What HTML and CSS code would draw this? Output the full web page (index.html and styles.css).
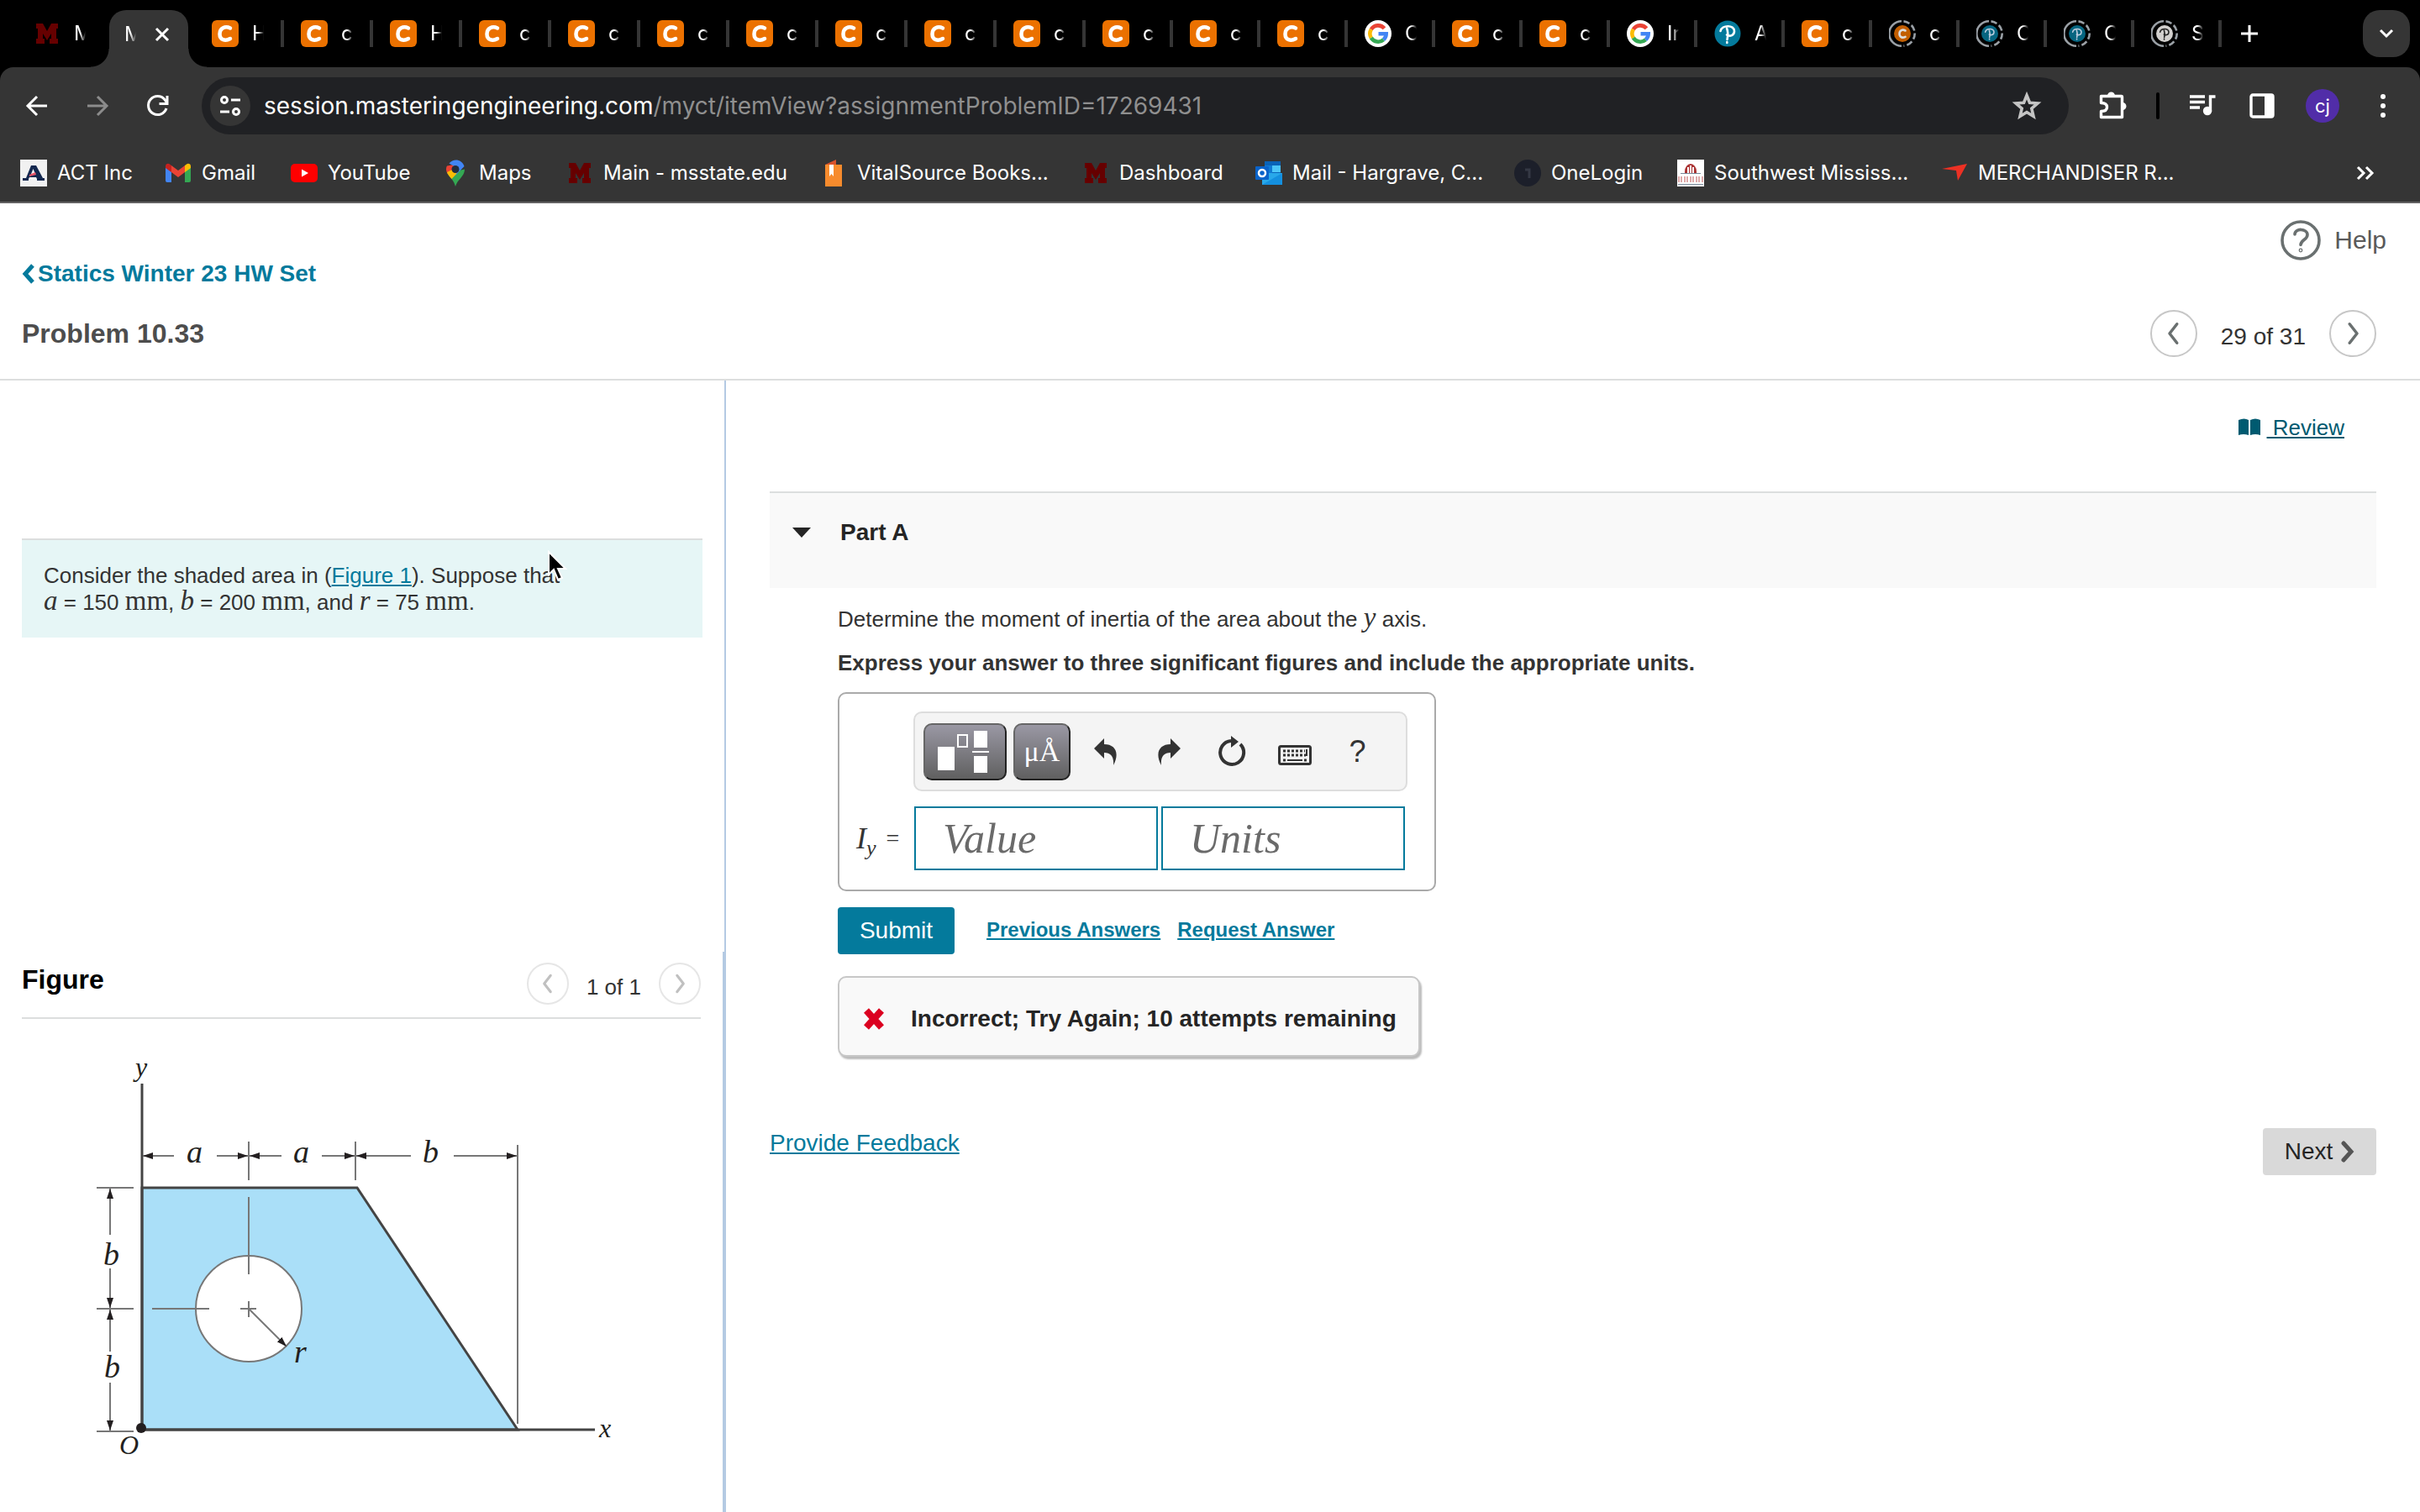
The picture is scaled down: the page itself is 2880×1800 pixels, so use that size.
FILE: index.html
```html
<!DOCTYPE html>
<html lang="en">
<head>
<meta charset="utf-8">
<title>Problem 10.33</title>
<link rel="stylesheet" href="styles.css">
</head>
<body>
<svg class="defs" aria-hidden="true">
  <symbol id="chegg" viewBox="0 0 32 32"><rect width="32" height="32" rx="6" fill="#eb7100"/><path d="M22 9.500C16 6.500 9.500 9.500 9.500 16.500 9.500 23.500 16 25.500 22 22" fill="none" stroke="#fff" stroke-width="4.500" stroke-linecap="round"/></symbol>
  <symbol id="google" viewBox="0 0 32 32"><circle cx="16" cy="16" r="16" fill="#fff"/><g fill="none" stroke-width="4.600"><path d="M23.500 9.800A9.700 9.700 0 0 0 7.800 11" stroke="#ea4335"/><path d="M7.800 11A9.700 9.700 0 0 0 7.800 21" stroke="#fbbc05"/><path d="M7.800 21A9.700 9.700 0 0 0 22.500 23.300" stroke="#34a853"/><path d="M22.500 23.300A9.700 9.700 0 0 0 25.700 16.300H16.500" stroke="#4285f4"/></g></symbol>
  <symbol id="mstate" viewBox="0 0 32 32"><path d="M3 4h8l5 9 5-9h8v6h-2v12h2v6h-10v-6h2v-6l-5 8-5-8v6h2v6H3v-6h2V10H3z" fill="#660000"/></symbol>
  <symbol id="pearson-mark" viewBox="0 0 32 32"><path d="M7.500 13C9 5.500 24 5 24 13c0 5-5 7-9 4.500M15 9.500c1.500 4 1.500 9 .5 13.500M15.300 26v1" fill="none" stroke="currentColor" stroke-width="2.600" stroke-linecap="round"/></symbol>
  <symbol id="pearson" viewBox="0 0 32 32"><circle cx="16" cy="16" r="15.500" fill="#047a9c"/><use href="#pearson-mark" color="#fff"/></symbol>
  <symbol id="ring" viewBox="0 0 32 32"><g fill="none" stroke="#9aa0a6" stroke-width="2.600"><path d="M15 1.300a14.700 14.700 0 0 0 0 29.400"/><path d="M17.500 1.400A14.700 14.700 0 0 1 30.700 16a14.700 14.700 0 0 1-13.200 14.600" stroke-dasharray="7.400 3.100"/></g></symbol>
  <symbol id="chegg-idle" viewBox="0 0 32 32"><use href="#ring"/><circle cx="16" cy="16" r="10" fill="#c25e00"/><path d="M19.500 12.500c-3.500-2-7 0-7 3.800s3.500 5.500 7 3.500" fill="none" stroke="#ddd" stroke-width="2.600" stroke-linecap="round"/></symbol>
  <symbol id="pearson-idle" viewBox="0 0 32 32"><use href="#ring"/><circle cx="16" cy="16" r="10" fill="#066580"/><use href="#pearson-mark" x="6" y="6" width="20" height="20" color="#bcd"/></symbol>
  <symbol id="pearson-grey" viewBox="0 0 32 32"><use href="#ring"/><circle cx="16" cy="16" r="10" fill="#d2d0ce"/><use href="#pearson-mark" x="6" y="6" width="20" height="20" color="#222"/></symbol>
  <symbol id="left" viewBox="0 0 24 24"><path d="M15 3 8 12l7 9" fill="none" stroke="currentColor" stroke-width="2.800" stroke-linecap="round" stroke-linejoin="round"/></symbol>
  <symbol id="right" viewBox="0 0 24 24"><path d="m9 3 7 9-7 9" fill="none" stroke="currentColor" stroke-width="2.800" stroke-linecap="round" stroke-linejoin="round"/></symbol>
</svg>

<header class="browser">
  <div class="tabstrip">
    <div class="tabs" role="tablist">
      <button class="tab tab-first" role="tab"><svg class="fav"><use href="#mstate"/></svg><span class="tab-label">M</span></button>
      <button class="tab tab-active" role="tab" aria-selected="true"><span class="tab-label">M</span><svg class="tab-close" viewBox="0 0 18 18"><path d="m2 2 14 14M16 2 2 16" stroke="#fff" stroke-width="3"/></svg></button>
      <button class="tab" role="tab"><svg class="fav"><use href="#chegg"/></svg><span class="tab-label">H</span></button>
      <button class="tab" role="tab"><svg class="fav"><use href="#chegg"/></svg><span class="tab-label">c</span></button>
      <button class="tab" role="tab"><svg class="fav"><use href="#chegg"/></svg><span class="tab-label">H</span></button>
      <button class="tab" role="tab"><svg class="fav"><use href="#chegg"/></svg><span class="tab-label">c</span></button>
      <button class="tab" role="tab"><svg class="fav"><use href="#chegg"/></svg><span class="tab-label">c</span></button>
      <button class="tab" role="tab"><svg class="fav"><use href="#chegg"/></svg><span class="tab-label">c</span></button>
      <button class="tab" role="tab"><svg class="fav"><use href="#chegg"/></svg><span class="tab-label">c</span></button>
      <button class="tab" role="tab"><svg class="fav"><use href="#chegg"/></svg><span class="tab-label">c</span></button>
      <button class="tab" role="tab"><svg class="fav"><use href="#chegg"/></svg><span class="tab-label">c</span></button>
      <button class="tab" role="tab"><svg class="fav"><use href="#chegg"/></svg><span class="tab-label">c</span></button>
      <button class="tab tab-narrow" role="tab"><svg class="fav"><use href="#chegg"/></svg><span class="tab-label">c</span></button>
      <button class="tab tab-narrow" role="tab"><svg class="fav"><use href="#chegg"/></svg><span class="tab-label">c</span></button>
      <button class="tab tab-narrow" role="tab"><svg class="fav"><use href="#chegg"/></svg><span class="tab-label">c</span></button>
      <button class="tab tab-narrow" role="tab"><svg class="fav"><use href="#google"/></svg><span class="tab-label">C</span></button>
      <button class="tab tab-narrow" role="tab"><svg class="fav"><use href="#chegg"/></svg><span class="tab-label">c</span></button>
      <button class="tab tab-narrow" role="tab"><svg class="fav"><use href="#chegg"/></svg><span class="tab-label">c</span></button>
      <button class="tab tab-narrow" role="tab"><svg class="fav"><use href="#google"/></svg><span class="tab-label">Ir</span></button>
      <button class="tab tab-narrow" role="tab"><svg class="fav"><use href="#pearson"/></svg><span class="tab-label">A</span></button>
      <button class="tab tab-narrow" role="tab"><svg class="fav"><use href="#chegg"/></svg><span class="tab-label">c</span></button>
      <button class="tab tab-narrow" role="tab"><svg class="fav"><use href="#chegg-idle"/></svg><span class="tab-label">c</span></button>
      <button class="tab tab-narrow" role="tab"><svg class="fav"><use href="#pearson-idle"/></svg><span class="tab-label">C</span></button>
      <button class="tab tab-narrow" role="tab"><svg class="fav"><use href="#pearson-idle"/></svg><span class="tab-label">C</span></button>
      <button class="tab tab-narrow" role="tab"><svg class="fav"><use href="#pearson-grey"/></svg><span class="tab-label">S</span></button>
    </div>
    <button class="new-tab" aria-label="New tab"><svg width="22" height="22" viewBox="0 0 22 22"><path d="M11 1v20M1 11h20" stroke="#fff" stroke-width="3"/></svg></button>
    <button class="tab-search" aria-label="Search tabs"><svg width="20" height="20" viewBox="0 0 20 20"><path d="m3 6 7 7 7-7" fill="none" stroke="#fff" stroke-width="3"/></svg></button>
  </div>

  <div class="toolbar">
    <div class="nav">
      <button class="tool" aria-label="Back"><svg viewBox="0 0 36 36"><path d="M30 18H8M18 7 7 18l11 11" fill="none" stroke="#fff" stroke-width="3"/></svg></button>
      <button class="tool" aria-label="Forward"><svg viewBox="0 0 36 36"><path d="M6 18h22M18 7l11 11-11 11" fill="none" stroke="#8c8c8c" stroke-width="3"/></svg></button>
      <button class="tool" aria-label="Reload"><svg viewBox="0 0 36 36"><path d="M28 21a11 11 0 1 1-2-10.500l2 3" fill="none" stroke="#fff" stroke-width="3"/><path d="M30.500 6v11h-11v-3h8V6z" fill="#fff"/></svg></button>
    </div>
    <div class="omnibox">
      <span class="site-info"><svg width="26" height="26" viewBox="0 0 26 26" fill="none" stroke="#fff" stroke-width="3"><circle cx="6" cy="6" r="3.500"/><path d="M14 6h11M1 20h11"/><circle cx="20" cy="20" r="3.500"/></svg></span>
      <span class="url">session.masteringengineering.com<span class="url-path">/myct/itemView?assignmentProblemID=17269431</span></span>
      <svg class="star" viewBox="0 0 36 36"><path d="m18 5.500 3.500 8.700 9.500.8-7.200 6.200 2.200 9.300-8-5-8 5 2.200-9.300L5 15l9.500-.8z" fill="none" stroke="#c4c4c4" stroke-width="3.600"/></svg>
    </div>
    <button class="tool" aria-label="Extensions"><svg viewBox="0 0 36 36"><path d="M4.500 6.500h24a1 1 0 0 1 1 1v24h-25v-7c5 0 7-2 7-5s-2-5-7-5z" fill="none" stroke="#fff" stroke-width="3.400" stroke-linejoin="round"/><path d="M12 6a4.500 4.500 0 0 1 9 0zM30 14a4.500 4.500 0 0 1 0 9z" fill="#fff"/></svg></button>
    <span class="divider"></span>
    <button class="tool" aria-label="Media"><svg viewBox="0 0 36 36"><path d="M2 7h18M2 13.500h18M2 20h12M26.500 25V7h6" fill="none" stroke="#fff" stroke-width="3.400"/><circle cx="23" cy="24" r="5.200" fill="#fff"/></svg></button>
    <button class="tool" aria-label="Side panel"><svg viewBox="0 0 36 36"><rect x="5" y="5" width="26" height="26" rx="2" fill="none" stroke="#fff" stroke-width="3.400"/><path d="M21 5h10v26H21z" fill="#fff"/></svg></button>
    <button class="avatar">cj</button>
    <button class="tool" aria-label="Menu"><svg viewBox="0 0 36 36" fill="#fff"><circle cx="18" cy="7" r="3"/><circle cx="18" cy="18" r="3"/><circle cx="18" cy="29" r="3"/></svg></button>
  </div>

  <nav class="bookmarks">
    <a href="#"><svg class="fav" viewBox="0 0 32 32"><rect width="32" height="32" fill="#f1f1f1"/><path d="M3 25h7v-2l1-2h8l1 2v2h9v-3h-2L19 7h-6L7 22H3z" fill="#14284f"/><path d="m15.500 11-2.500 6h5z" fill="#f1f1f1"/><path d="m11 18 7-3 1 3-8 2z" fill="#e9556a"/></svg>ACT Inc</a>
    <a href="#"><svg class="fav" viewBox="0 0 32 32"><path d="M1 9v16a2 2 0 0 0 2 2h5V14z" fill="#4285f4"/><path d="M31 9v16a2 2 0 0 1-2 2h-5V14z" fill="#34a853"/><path d="M24 7v8l7-5V8c0-3-3-4-5-2.500z" fill="#fbbc04"/><path d="M8 15V7l8 6 8-6v8l-8 6z" fill="#ea4335"/><path d="M1 8v2l7 5V7L6 5.500C4 4 1 5 1 8z" fill="#c5221f"/></svg>Gmail</a>
    <a href="#"><svg class="fav" viewBox="0 0 32 32"><rect y="5" width="32" height="22" rx="5" fill="#f00"/><path d="m13 11.500 8 4.500-8 4.500z" fill="#fff"/></svg>YouTube</a>
    <a href="#"><svg class="fav" viewBox="0 0 32 32"><path d="M16 32c2-8 11-12 11-20.500L6 16c3 5 8 8 10 16z" fill="#34a853"/><path d="M6 7.500C4 11 5 15 8 18.500L20 5z" fill="#ea4335"/><path d="M6 15c1 3 3 5 5.500 8L22 12l-10 0z" fill="#fbbc04"/><path d="M8.500 4.500C14-2 24 0 26.500 8L16 19l4-8z" fill="#4285f4"/><circle cx="16" cy="11.500" r="4.500" fill="#222c3c"/></svg>Maps</a>
    <a href="#"><svg class="fav"><use href="#mstate"/></svg>Main - msstate.edu</a>
    <a href="#"><svg class="fav" viewBox="0 0 32 32"><path d="M6 6h20v26H6z" fill="#f78b2d"/><path d="m6 6 13-6v6z" fill="#d9532c"/><path d="M11 6h5v14l-2.500-3-2.500 3z" fill="#fff"/></svg>VitalSource Books...</a>
    <a href="#"><svg class="fav"><use href="#mstate"/></svg>Dashboard</a>
    <a href="#"><svg class="fav" viewBox="0 0 32 32"><path d="M11 2h19v14H11z" fill="#0a63b8"/><path d="M11 7h9v10h-9z" fill="#0f7ad4"/><path d="M20 7h10v8H20z" fill="#4cc6f8"/><path d="M8 16h24v14H8z" fill="#28a8ea"/><path d="m8 30 24-14v14z" fill="#1490df"/><rect y="8" width="16" height="16" rx="1" fill="#0a63c9"/><circle cx="8" cy="16" r="4" fill="none" stroke="#fff" stroke-width="2.500"/></svg>Mail - Hargrave, C...</a>
    <a href="#"><svg class="fav" viewBox="0 0 32 32"><circle cx="16" cy="16" r="16" fill="#1c1f2a"/><path d="M13 12h5v10" fill="none" stroke="#343844" stroke-width="3"/></svg>OneLogin</a>
    <a href="#"><svg class="fav" viewBox="0 0 32 32"><rect width="32" height="32" fill="#fff"/><path d="M9 14a7 9 0 0 1 14 0v3H9z" fill="#a33"/><path d="M12 9h2v7h-2zM18 9h2v7h-2zM15 7h2v9h-2z" fill="#fff"/><path d="M4 16h24v1H4zM1 29h30v1H1z" fill="#789"/><path d="M2 20v7M5 20v7M9 20v7M12 20v7M16 20v7M19 20v7M23 20v7M26 20v7M30 20v7" stroke="#b55"/></svg>Southwest Mississ...</a>
    <a href="#"><svg class="fav" viewBox="0 0 32 32"><path d="M1 11 31 5 20 25l-2-12z" fill="#ed3124"/></svg>MERCHANDISER R...</a>
    <button class="more" aria-label="More bookmarks"><svg width="22" height="18" viewBox="0 0 22 18"><path d="m2 2 7 7-7 7M12 2l7 7-7 7" fill="none" stroke="#fff" stroke-width="3"/></svg></button>
  </nav>
</header>

<div class="page-head">
  <a class="help" href="#"><svg width="48" height="48" viewBox="0 0 48 48" fill="none" stroke="#6a7070" stroke-width="3.600"><circle cx="24" cy="24" r="22"/><path d="M17 17c0-8 15-7 15 .5 0 6-8 6-8 12" stroke-linecap="round"/><circle cx="24" cy="36" r=".6"/></svg>Help</a>
  <a class="back" href="#"><svg width="18" height="24" viewBox="0 0 18 24"><path d="M13 2 4 12l9 10" fill="none" stroke="#047a9c" stroke-width="5"/></svg>Statics Winter 23 HW Set</a>
  <div class="title-row">
    <h1>Problem 10.33</h1>
    <div class="pager">
      <button class="circle" aria-label="Previous"><svg width="30" height="30"><use href="#left"/></svg></button>
      <span class="count">29 of 31</span>
      <button class="circle" aria-label="Next"><svg width="30" height="30"><use href="#right"/></svg></button>
    </div>
  </div>
</div>

<main class="panes">
  <aside class="side">
    <section class="intro">
      <p class="statement">Consider the shaded area in (<a href="#figure">Figure 1</a>). Suppose that<br><i class="math">a</i> = 150 <span class="math">mm</span>, <i class="math">b</i> = 200 <span class="math">mm</span>, and <i class="math">r</i> = 75 <span class="math">mm</span>.
        <svg class="cursor" viewBox="0 0 24 38"><path d="M2 2v27l6-6 5 12 5-2-5-11h9z" fill="#000" stroke="#fff" stroke-width="2"/></svg></p>
    </section>
    <section class="figure" id="figure">
      <div class="figure-head">
        <h2>Figure</h2>
        <div class="pager pager-small">
          <button class="circle" disabled aria-label="Previous figure"><svg width="26" height="26"><use href="#left"/></svg></button>
          <span class="count">1 of 1</span>
          <button class="circle" disabled aria-label="Next figure"><svg width="26" height="26"><use href="#right"/></svg></button>
        </div>
      </div>
      <svg class="diagram" viewBox="26 1213 808 587" role="img" aria-label="Shaded area with a circular hole">
        <defs><marker id="arrow" viewBox="0 0 12 8" refX="12" refY="4" markerWidth="12" markerHeight="8" markerUnits="userSpaceOnUse" orient="auto-start-reverse"><path d="M0 0l12 4-12 4z" fill="#231f20"/></marker></defs>
        <path d="M169 1414h256l191 288H169z" fill="#aadff8" stroke="#444" stroke-width="3"/>
        <path d="M169 1290v412M169 1702h539" stroke="#444" stroke-width="3"/>
        <circle cx="296" cy="1558" r="63" fill="#fff" stroke="#777" stroke-width="2"/>
        <g stroke="#777" stroke-width="2" fill="none">
          <path d="M296 1359v46M296 1425v92M423 1359v46M616 1363v332M115 1414h44M115 1558h44M115 1704h44M181 1558h68M286 1558h19M296 1549v19"/>
          <g marker-end="url(#arrow)">
            <path d="M207 1376h-37"/><path d="M258 1376h37"/><path d="M335 1376h-38"/><path d="M383 1376h39"/><path d="M489 1376h-65"/><path d="M540 1376h75"/>
            <path d="M131 1470v-55"/><path d="M131 1510v47"/><path d="M131 1609v-50"/><path d="M131 1646v57"/><path d="m296 1558 45 45"/>
          </g>
        </g>
        <circle cx="168" cy="1700" r="6" fill="#231f20"/>
        <g class="dims"><text x="222" y="1384">a</text><text x="349" y="1384">a</text><text x="503" y="1384">b</text><text x="123" y="1506">b</text><text x="124" y="1640">b</text><text x="350" y="1622">r</text></g>
        <g class="axes"><text x="161" y="1281">y</text><text x="713" y="1711">x</text><text x="142" y="1731">O</text></g>
      </svg>
    </section>
  </aside>

  <div class="work">
    <a class="review" href="#"><svg width="26" height="22" viewBox="0 0 26 22"><path d="M0 2q7-3 12 0v18q-6-2-12 0zM14 2q6-3 12 0v18q-6-2-12 0z" fill="#005a70"/></svg><span>&nbsp;Review</span></a>
    <div class="part-head"><svg width="22" height="12" viewBox="0 0 22 12"><path d="M0 0h22L11 12z" fill="#252525"/></svg><h2>Part A</h2></div>
    <div class="part-body">
      <p>Determine the moment of inertia of the area about the <i class="math">y</i> axis.</p>
      <p class="strong">Express your answer to three significant figures and include the appropriate units.</p>
      <form class="answer">
        <div class="editor-tools">
          <button type="button" class="key key-wide" aria-label="Templates"><svg width="66" height="52" viewBox="0 0 66 52"><path d="M0 20h20v28H0zM43 1h16v20H43zM43 31h16v20H43zM41 25h20v2H41z" fill="#fff"/><path d="M24 6h11v14H24z" fill="none" stroke="#fff" stroke-width="2"/></svg></button>
          <button type="button" class="key">μÅ</button>
          <button type="button" class="plain" aria-label="Undo"><svg width="30" height="34" viewBox="0 0 30 34"><path d="M13 1v7c13 0 19 10 11 25 1-10-3-15-11-15v7L1 13z" fill="#333"/></svg></button>
          <button type="button" class="plain" aria-label="Redo"><svg width="30" height="34" viewBox="0 0 30 34"><path d="M17 1v7C4 8-2 18 6 33 5 23 9 18 17 18v7l12-12z" fill="#333"/></svg></button>
          <button type="button" class="plain" aria-label="Reset"><svg width="34" height="40" viewBox="0 0 34 40"><path d="M27 11a14 14 0 1 1-11-4" fill="none" stroke="#333" stroke-width="4"/><path d="m16 1 9 7-9 7z" fill="#333"/></svg></button>
          <button type="button" class="plain" aria-label="Keyboard"><svg class="keyboard" width="40" height="24" viewBox="0 0 40 24"><rect x="1.500" y="1.500" width="37" height="21" rx="2" fill="none" stroke="#333" stroke-width="3"/><path d="M6 7h26M6 12h27M6 18h3M31 18h3" stroke="#333" stroke-width="3" stroke-dasharray="3 2"/><path d="M11 18h18M34 5v8" stroke="#333" stroke-width="2"/></svg></button>
          <button type="button" class="plain question" aria-label="Help">?</button>
        </div>
        <label class="symbol" for="value"><i>I<sub>y</sub></i> <span>=</span></label>
        <div class="fields"><input id="value" type="text" placeholder="Value"><input type="text" placeholder="Units" aria-label="Units"></div>
      </form>
      <div class="actions"><button class="submit">Submit</button><a href="#">Previous Answers</a><a href="#">Request Answer</a></div>
      <div class="result"><svg width="28" height="28" viewBox="0 0 28 28"><path d="m5 4 18 20M23 4 5 24" stroke="#db0020" stroke-width="8"/></svg>Incorrect; Try Again; 10 attempts remaining</div>
    </div>
    <div class="foot"><a href="#">Provide Feedback</a><button class="next">Next <svg width="16" height="26" viewBox="0 0 16 26"><path d="m3 3 9 10-9 10" fill="none" stroke="#555" stroke-width="5" stroke-linecap="round"/></svg></button></div>
  </div>
</main>
</body>
</html>
```
FILE: styles.css
```css
* { box-sizing: border-box; }
body {
  margin: 0;
  min-height: 100vh;
  display: flex;
  flex-direction: column;
  background: #fff;
  color: #333;
  font: 26px/32px "Liberation Sans", Arial, sans-serif;
}
h1, h2, p { margin: 0; }
button { margin: 0; padding: 0; border: 0; background: none; color: inherit; font: inherit; }
a { color: #047a9c; }
svg { display: block; flex: none; }
.defs { position: absolute; width: 0; height: 0; }

/* Browser frame */
.browser { background: #000; color: #fff; font-family: Inter, sans-serif; font-size: 24px; border-bottom: 2px solid #636163; }
.fav { width: 32px; height: 32px; }
.tabstrip { display: flex; align-items: center; height: 80px; padding: 0 12px 0 24px; }
.tabs { display: flex; align-items: center; height: 80px; }
.tab { display: flex; align-items: center; gap: 16px; width: 106px; height: 32px; padding-left: 20px; border-right: 4px solid #353535; }
.tab-narrow { width: 104px; }
.tab-first { padding-left: 16px; border: 0; }
.tab-label { width: 14px; overflow: hidden; text-align: left; -webkit-mask: linear-gradient(90deg, #000 50%, transparent); mask: linear-gradient(90deg, #000 50%, transparent); }
.tab-active { position: relative; align-self: flex-end; width: 94px; height: 68px; margin-right: 8px; padding: 0 0 10px 18px; gap: 22px; border: 0; border-radius: 20px 20px 0 0; background: #353535; }
.tab-active::before, .tab-active::after { content: ""; position: absolute; bottom: 0; width: 22px; height: 22px; }
.tab-active::before { left: -22px; background: radial-gradient(circle at 0 0, transparent 21px, #353535 22px); }
.tab-active::after { right: -22px; background: radial-gradient(circle at 100% 0, transparent 21px, #353535 22px); }
.tab-close { width: 18px; height: 18px; }
.new-tab { margin-left: 22px; }
.tab-search { display: grid; place-items: center; width: 56px; height: 56px; margin-left: auto; border-radius: 20px; background: #353535; }

.toolbar { display: flex; align-items: center; gap: 34px; padding: 12px 26px; background: #353535; border-radius: 16px 16px 0 0; }
.nav { display: flex; gap: 36px; }
.tool, .tool svg, .star { display: block; width: 36px; height: 36px; }
.omnibox { flex: 1; display: flex; align-items: center; height: 68px; padding: 0 32px 0 10px; border-radius: 34px; background: #202124; }
.site-info { display: grid; place-items: center; width: 48px; height: 48px; border-radius: 50%; background: #353535; }
.url { flex: 1; padding-left: 16px; font-size: 28px; }
.url-path { color: #8f8f8f; }
.divider { width: 4px; height: 32px; border-radius: 2px; background: #000; }
.avatar { width: 40px; height: 40px; border-radius: 50%; background: #512da8; font-size: 22px; }

.bookmarks { display: grid; grid-template-columns: 172px 150px 180px 148px 302px 312px 206px 308px 194px 314px 1fr auto; align-items: center; height: 68px; padding: 0 54px 0 24px; background: #353535; }
.bookmarks a { display: flex; align-items: center; gap: 12px; color: #fff; text-decoration: none; white-space: nowrap; }

/* Page heading */
.page-head { display: flex; flex-direction: column; align-items: stretch; padding: 20px 52px 26px 26px; border-bottom: 2px solid #dcdede; }
.help { display: flex; align-items: center; justify-content: flex-end; gap: 16px; margin-right: -12px; color: #5a5a5a; font-size: 30px; text-decoration: none; }
.back { display: flex; align-items: center; align-self: flex-start; gap: 1px; font-size: 28px; font-weight: bold; text-decoration: none; }
.title-row { display: flex; align-items: center; justify-content: space-between; margin-top: 27px; }
h1 { color: #4d4d4d; font-size: 32px; }
.pager { display: flex; align-items: center; gap: 28px; font-size: 28px; }
.circle { display: grid; place-items: center; width: 56px; height: 56px; border: 2px solid #c7c7c7; border-radius: 50%; color: #6a7070; }
.count { padding-top: 8px; }

/* Left pane */
.panes { flex: 1; display: grid; grid-template-columns: 30% 1fr; }
.side { display: flex; flex-direction: column; }
.intro { min-height: 680px; padding: 188px 26px 0; border-right: 2px solid #b4cae3; }
.statement { position: relative; padding: 26px; border-top: 2px solid #dcdede; background: #e6f6f6; }
.math { font-family: "Liberation Serif", serif; font-size: 33px; line-height: 0; }
.cursor { position: absolute; left: 625px; top: 12px; width: 24px; height: 38px; }
.figure { flex: 1; padding: 13px 26px 0; border-right: 4px solid #b4cae3; }
.figure-head { display: flex; justify-content: space-between; padding-bottom: 15px; border-bottom: 2px solid #dcdede; }
.figure-head h2 { color: #000; font-size: 32px; line-height: 40px; }
.pager-small { gap: 21px; font-size: 26px; }
.pager-small .circle { width: 50px; height: 50px; border-color: #e6e6e6; color: #c0c0c0; }
.diagram { width: 100%; }
.diagram text { fill: #231f20; font-family: "Liberation Serif", serif; font-style: italic; }
.dims { font-size: 38px; }
.axes { font-size: 32px; }

/* Right pane */
.work { padding: 40px 52px 0; }
.review { display: flex; align-items: center; justify-content: flex-end; gap: 8px; margin-right: 38px; color: #005a70; text-decoration: none; }
.review span { text-decoration: underline; }
.part-head { display: flex; align-items: center; gap: 35px; margin-top: 60px; padding: 31px 28px 50px 27px; border-top: 2px solid #dcdede; background: #f9f9f9; color: #252525; }
.part-head h2 { font-size: 28px; }
.part-body { display: flex; flex-direction: column; align-items: flex-start; padding: 21px 0 0 81px; }
.strong { margin-top: 20px; font-weight: bold; }
.answer { display: grid; grid-template-columns: 68px 588px; row-gap: 18px; align-items: center; margin-top: 19px; padding: 21px 32px 23px 20px; border: 2px solid #aaa; border-radius: 10px; }
.editor-tools { grid-column: 2; display: flex; align-items: center; gap: 8px; height: 95px; padding-left: 10px; border: 2px solid #ddd; border-radius: 10px; background: #f4f4f4; }
.key { display: grid; place-items: center; width: 68px; height: 68px; border: 2px solid #222; border-top-color: #666; border-left-color: #666; border-radius: 10px; background: linear-gradient(#9a98a4, #606060); color: #fff; font: 34px/40px "Liberation Serif", serif; }
.key-wide { width: 99px; }
.plain { display: grid; place-items: center; width: 67px; height: 68px; color: #333; }
.keyboard { margin-top: 8px; }
.question { font-size: 36px; }
.symbol { display: flex; align-items: center; gap: 12px; font-family: "Liberation Serif", serif; font-size: 36px; }
.symbol sub { font-size: 26px; line-height: 0; }
.symbol span { font-size: 28px; }
.fields { display: flex; gap: 4px; padding-left: 1px; }
.fields input { width: 290px; height: 76px; padding: 0 32px; border: 2px solid #047a9c; background: #fff; font: italic 50px "Liberation Serif", serif; color: #333; }
.fields input::placeholder { color: #6a6a6a; opacity: 1; }
.actions { display: flex; align-items: center; gap: 20px; margin-top: 19px; font-size: 24px; font-weight: bold; }
.actions a { padding-bottom: 2px; }
.submit { width: 139px; height: 56px; margin-right: 18px; border-radius: 4px; background: #047a9c; color: #fff; font-size: 28px; font-weight: normal; }
.result { display: flex; align-items: center; gap: 30px; height: 96px; margin-top: 26px; padding: 6px 26px 0 27px; border: 2px solid #c7c7c7; border-radius: 10px; background: #f9f9f9; box-shadow: 2px 3px 2px #bbb; color: #252525; font-size: 28px; font-weight: bold; }
.foot { display: flex; justify-content: space-between; align-items: flex-start; margin-top: 85px; font-size: 28px; }
.foot a { line-height: 36px; }
.next { display: flex; align-items: center; justify-content: center; gap: 10px; width: 135px; height: 56px; border-radius: 4px; background: #d9d9d9; color: #252525; }
```
